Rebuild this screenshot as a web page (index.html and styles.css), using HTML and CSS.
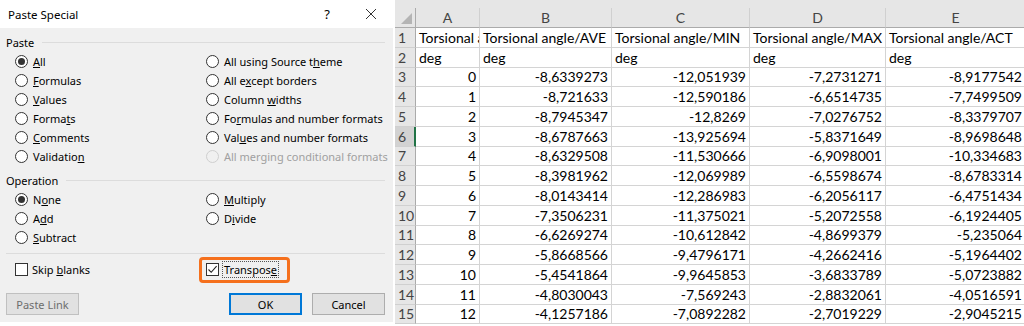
FILE: index.html
```html
<!DOCTYPE html>
<html lang="en">
<head>
    <meta charset="UTF-8">
    <title>Paste Special</title>
    <link rel="stylesheet" href="styles.css">
</head>
<body>
    <div class="dialog">
        <div class="titlebar">
            <span class="title">Paste Special</span>
            <span class="help">?</span>
            <svg class="close" width="12" height="12" viewBox="0 0 12 12"><path d="M1 1L11 11M11 1L1 11" stroke="#333" stroke-width="1"/></svg>
        </div>
        <div class="dialog-body">
            <div class="group-label"><span>Paste</span><i></i></div>
            <div class="options">
                <label class="radio checked"><b></b><span><u>A</u>ll</span></label>
                <label class="radio"><b></b><span>All using Source t<u>h</u>eme</span></label>
                <label class="radio"><b></b><span><u>F</u>ormulas</span></label>
                <label class="radio"><b></b><span>All e<u>x</u>cept borders</span></label>
                <label class="radio"><b></b><span><u>V</u>alues</span></label>
                <label class="radio"><b></b><span>Column <u>w</u>idths</span></label>
                <label class="radio"><b></b><span>Forma<u>t</u>s</span></label>
                <label class="radio"><b></b><span>Fo<u>r</u>mulas and number formats</span></label>
                <label class="radio"><b></b><span><u>C</u>omments</span></label>
                <label class="radio"><b></b><span>Val<u>u</u>es and number formats</span></label>
                <label class="radio"><b></b><span>Validatio<u>n</u></span></label>
                <label class="radio disabled"><b></b><span>All merging conditional formats</span></label>
            </div>

            <div class="group-label op"><span>Operation</span><i></i></div>
            <div class="options">
                <label class="radio checked"><b></b><span>N<u>o</u>ne</span></label>
                <label class="radio"><b></b><span><u>M</u>ultiply</span></label>
                <label class="radio"><b></b><span>A<u>d</u>d</span></label>
                <label class="radio"><b></b><span>D<u>i</u>vide</span></label>
                <label class="radio"><b></b><span><u>S</u>ubtract</span></label>
            </div>

            <div class="separator"></div>

            <div class="options checks">
                <label class="check"><b></b><span>Skip <u>b</u>lanks</span></label>
                <label class="check checked highlight">
                    <b><svg width="11" height="11" viewBox="0 0 11 11"><path d="M1.5 5.5L4.2 8.3L9.6 2.2" fill="none" stroke="#222" stroke-width="1.1"/></svg></b>
                    <span class="focus">Transpos<u>e</u></span>
                </label>
            </div>

            <div class="buttons">
                <button class="btn disabled">Paste Link</button>
                <span class="spacer"></span>
                <button class="btn default">OK</button>
                <button class="btn">Cancel</button>
            </div>
        </div>
    </div>

    <div class="sheet">
        <div class="top-band"></div>
        <div class="grid">
            <div class="hd corner"></div>
            <div class="hd col">A</div>
            <div class="hd col">B</div>
            <div class="hd col">C</div>
            <div class="hd col">D</div>
            <div class="hd col">E</div>

            <div class="hd row">1</div>
            <div class="c t">Torsional angle</div>
            <div class="c t">Torsional angle/AVE</div>
            <div class="c t">Torsional angle/MIN</div>
            <div class="c t">Torsional angle/MAX</div>
            <div class="c t">Torsional angle/ACT</div>

            <div class="hd row">2</div>
            <div class="c t">deg</div>
            <div class="c t">deg</div>
            <div class="c t">deg</div>
            <div class="c t">deg</div>
            <div class="c t">deg</div>

            <div class="hd row">3</div>
            <div class="c">0</div><div class="c">-8,6339273</div><div class="c">-12,051939</div><div class="c">-7,2731271</div><div class="c">-8,9177542</div>
            <div class="hd row">4</div>
            <div class="c">1</div><div class="c">-8,721633</div><div class="c">-12,590186</div><div class="c">-6,6514735</div><div class="c">-7,7499509</div>
            <div class="hd row">5</div>
            <div class="c">2</div><div class="c">-8,7945347</div><div class="c">-12,8269</div><div class="c">-7,0276752</div><div class="c">-8,3379707</div>
            <div class="hd row active">6</div>
            <div class="c">3</div><div class="c">-8,6787663</div><div class="c">-13,925694</div><div class="c">-5,8371649</div><div class="c">-8,9698648</div>
            <div class="hd row">7</div>
            <div class="c">4</div><div class="c">-8,6329508</div><div class="c">-11,530666</div><div class="c">-6,9098001</div><div class="c">-10,334683</div>
            <div class="hd row">8</div>
            <div class="c">5</div><div class="c">-8,3981962</div><div class="c">-12,069989</div><div class="c">-6,5598674</div><div class="c">-8,6783314</div>
            <div class="hd row">9</div>
            <div class="c">6</div><div class="c">-8,0143414</div><div class="c">-12,286983</div><div class="c">-6,2056117</div><div class="c">-6,4751434</div>
            <div class="hd row">10</div>
            <div class="c">7</div><div class="c">-7,3506231</div><div class="c">-11,375021</div><div class="c">-5,2072558</div><div class="c">-6,1924405</div>
            <div class="hd row">11</div>
            <div class="c">8</div><div class="c">-6,6269274</div><div class="c">-10,612842</div><div class="c">-4,8699379</div><div class="c">-5,235064</div>
            <div class="hd row">12</div>
            <div class="c">9</div><div class="c">-5,8668566</div><div class="c">-9,4796171</div><div class="c">-4,2662416</div><div class="c">-5,1964402</div>
            <div class="hd row">13</div>
            <div class="c">10</div><div class="c">-5,4541864</div><div class="c">-9,9645853</div><div class="c">-3,6833789</div><div class="c">-5,0723882</div>
            <div class="hd row">14</div>
            <div class="c">11</div><div class="c">-4,8030043</div><div class="c">-7,569243</div><div class="c">-2,8832061</div><div class="c">-4,0516591</div>
            <div class="hd row">15</div>
            <div class="c">12</div><div class="c">-4,1257186</div><div class="c">-7,0892282</div><div class="c">-2,7019229</div><div class="c">-2,9045215</div>
        </div>
    </div>
</body>
</html>
```

FILE: styles.css
```css
body {
    margin: 0;
    display: flex;
    background-color: #fff;
    height: 326px;
    overflow: hidden;
}

/* dialog */

.dialog {
    width: 393px;
    height: 322px;
    display: flex;
    flex-direction: column;
    font-family: "Noto Sans", sans-serif;
    font-size: 11px;
    color: #000;
    white-space: nowrap;
}

.titlebar {
    height: 28px;
    background-color: #fff;
    display: flex;
    align-items: center;
    padding-left: 8px;
    font-size: 11.5px;
}

.title {
    flex: 1;
}

.help {
    font-size: 13px;
    margin-right: 35px;
}

.close {
    margin-right: 16px;
}

.dialog-body {
    flex: 1;
    background-color: #f0f0f0;
    padding: 6px 8px 0 6px;
}

.group-label {
    display: flex;
    align-items: center;
    height: 16px;
}

.group-label i {
    flex: 1;
    height: 1px;
    background-color: #dcdcdc;
    margin-left: 8px;
}

.group-label.op {
    margin-top: 6px;
}

.options {
    display: grid;
    grid-template-columns: 191px 1fr;
    grid-auto-rows: 19px;
    padding-left: 9px;
    margin-top: 2px;
}

.radio,
.check {
    display: flex;
    align-items: center;
}

.radio b {
    width: 11px;
    height: 11px;
    border: 1px solid #333;
    border-radius: 50%;
    background-color: #fff;
    margin-right: 5px;
    display: flex;
    align-items: center;
    justify-content: center;
}

.radio.checked b::after {
    content: "";
    width: 7px;
    height: 7px;
    border-radius: 50%;
    background-color: #333;
}

.radio.disabled {
    color: #a0a0a0;
}

.radio.disabled b {
    border-color: #cfcfcf;
    background-color: #f0f0f0;
}

.separator {
    height: 1px;
    background-color: #dcdcdc;
    margin-top: 6px;
}

.options.checks {
    margin-top: 6px;
    grid-auto-rows: 18px;
}

.check b {
    width: 11px;
    height: 11px;
    border: 1px solid #333;
    background-color: #fff;
    margin-right: 4px;
    display: flex;
}

.check .focus {
    outline: 1px dotted #555;
    padding: 0 1px;
}

.highlight {
    position: relative;
    width: max-content;
}

.highlight::after {
    content: "";
    position: absolute;
    left: -7px;
    right: -12px;
    top: -3px;
    bottom: -5px;
    border: 3px solid #f5701d;
    border-radius: 4px;
}

.buttons {
    display: flex;
    margin-top: 15px;
}

.spacer {
    flex: 1;
}

.btn {
    font-family: "Noto Sans", sans-serif;
    font-size: 11px;
    height: 22px;
    width: 73px;
    padding: 0;
    background-color: #e1e1e1;
    border: 1px solid #adadad;
    color: #000;
    margin-left: 10px;
}

.btn.disabled {
    margin-left: 0;
    color: #6d6d6d;
    border-color: #c0c0c0;
}

.btn.default {
    border: 2px solid #0078d7;
}

/* sheet */

.sheet {
    flex: 1;
    margin-left: 2px;
    overflow: hidden;
    font-family: "Lato", sans-serif;
    font-size: 14px;
    color: #000;
    background-color: #fff;
}

.top-band {
    height: 8px;
    background-color: #e6e6e6;
}

.grid {
    display: grid;
    grid-template-columns: 21px 64px 132px 138px 136px 140px;
    grid-template-rows: 20px;
    grid-auto-rows: 19.75px;
}

.hd {
    background-color: #e6e6e6;
    color: #444;
    display: flex;
    align-items: center;
    justify-content: center;
    border-right: 1px solid #d0d0d0;
    border-bottom: 1px solid #d0d0d0;
}

.hd.col {
    border-bottom-color: #ababab;
}

.hd.row {
    justify-content: flex-start;
    padding-left: 3px;
    border-right-color: #ababab;
}

.hd.row.active {
    background-color: #d2d2d2;
    border-right: 2px solid #217346;
}

.corner {
    position: relative;
    border-right-color: #ababab;
    border-bottom-color: #ababab;
}

.corner::after {
    content: "";
    position: absolute;
    right: 3px;
    bottom: 3px;
    border-left: 11px solid transparent;
    border-bottom: 11px solid #b4b4b4;
}

.c {
    border-right: 1px solid #d4d4d4;
    border-bottom: 1px solid #d4d4d4;
    display: flex;
    align-items: center;
    justify-content: flex-end;
    padding: 0 3px;
    white-space: nowrap;
    overflow: hidden;
}

.c.t {
    justify-content: flex-start;
}
```
